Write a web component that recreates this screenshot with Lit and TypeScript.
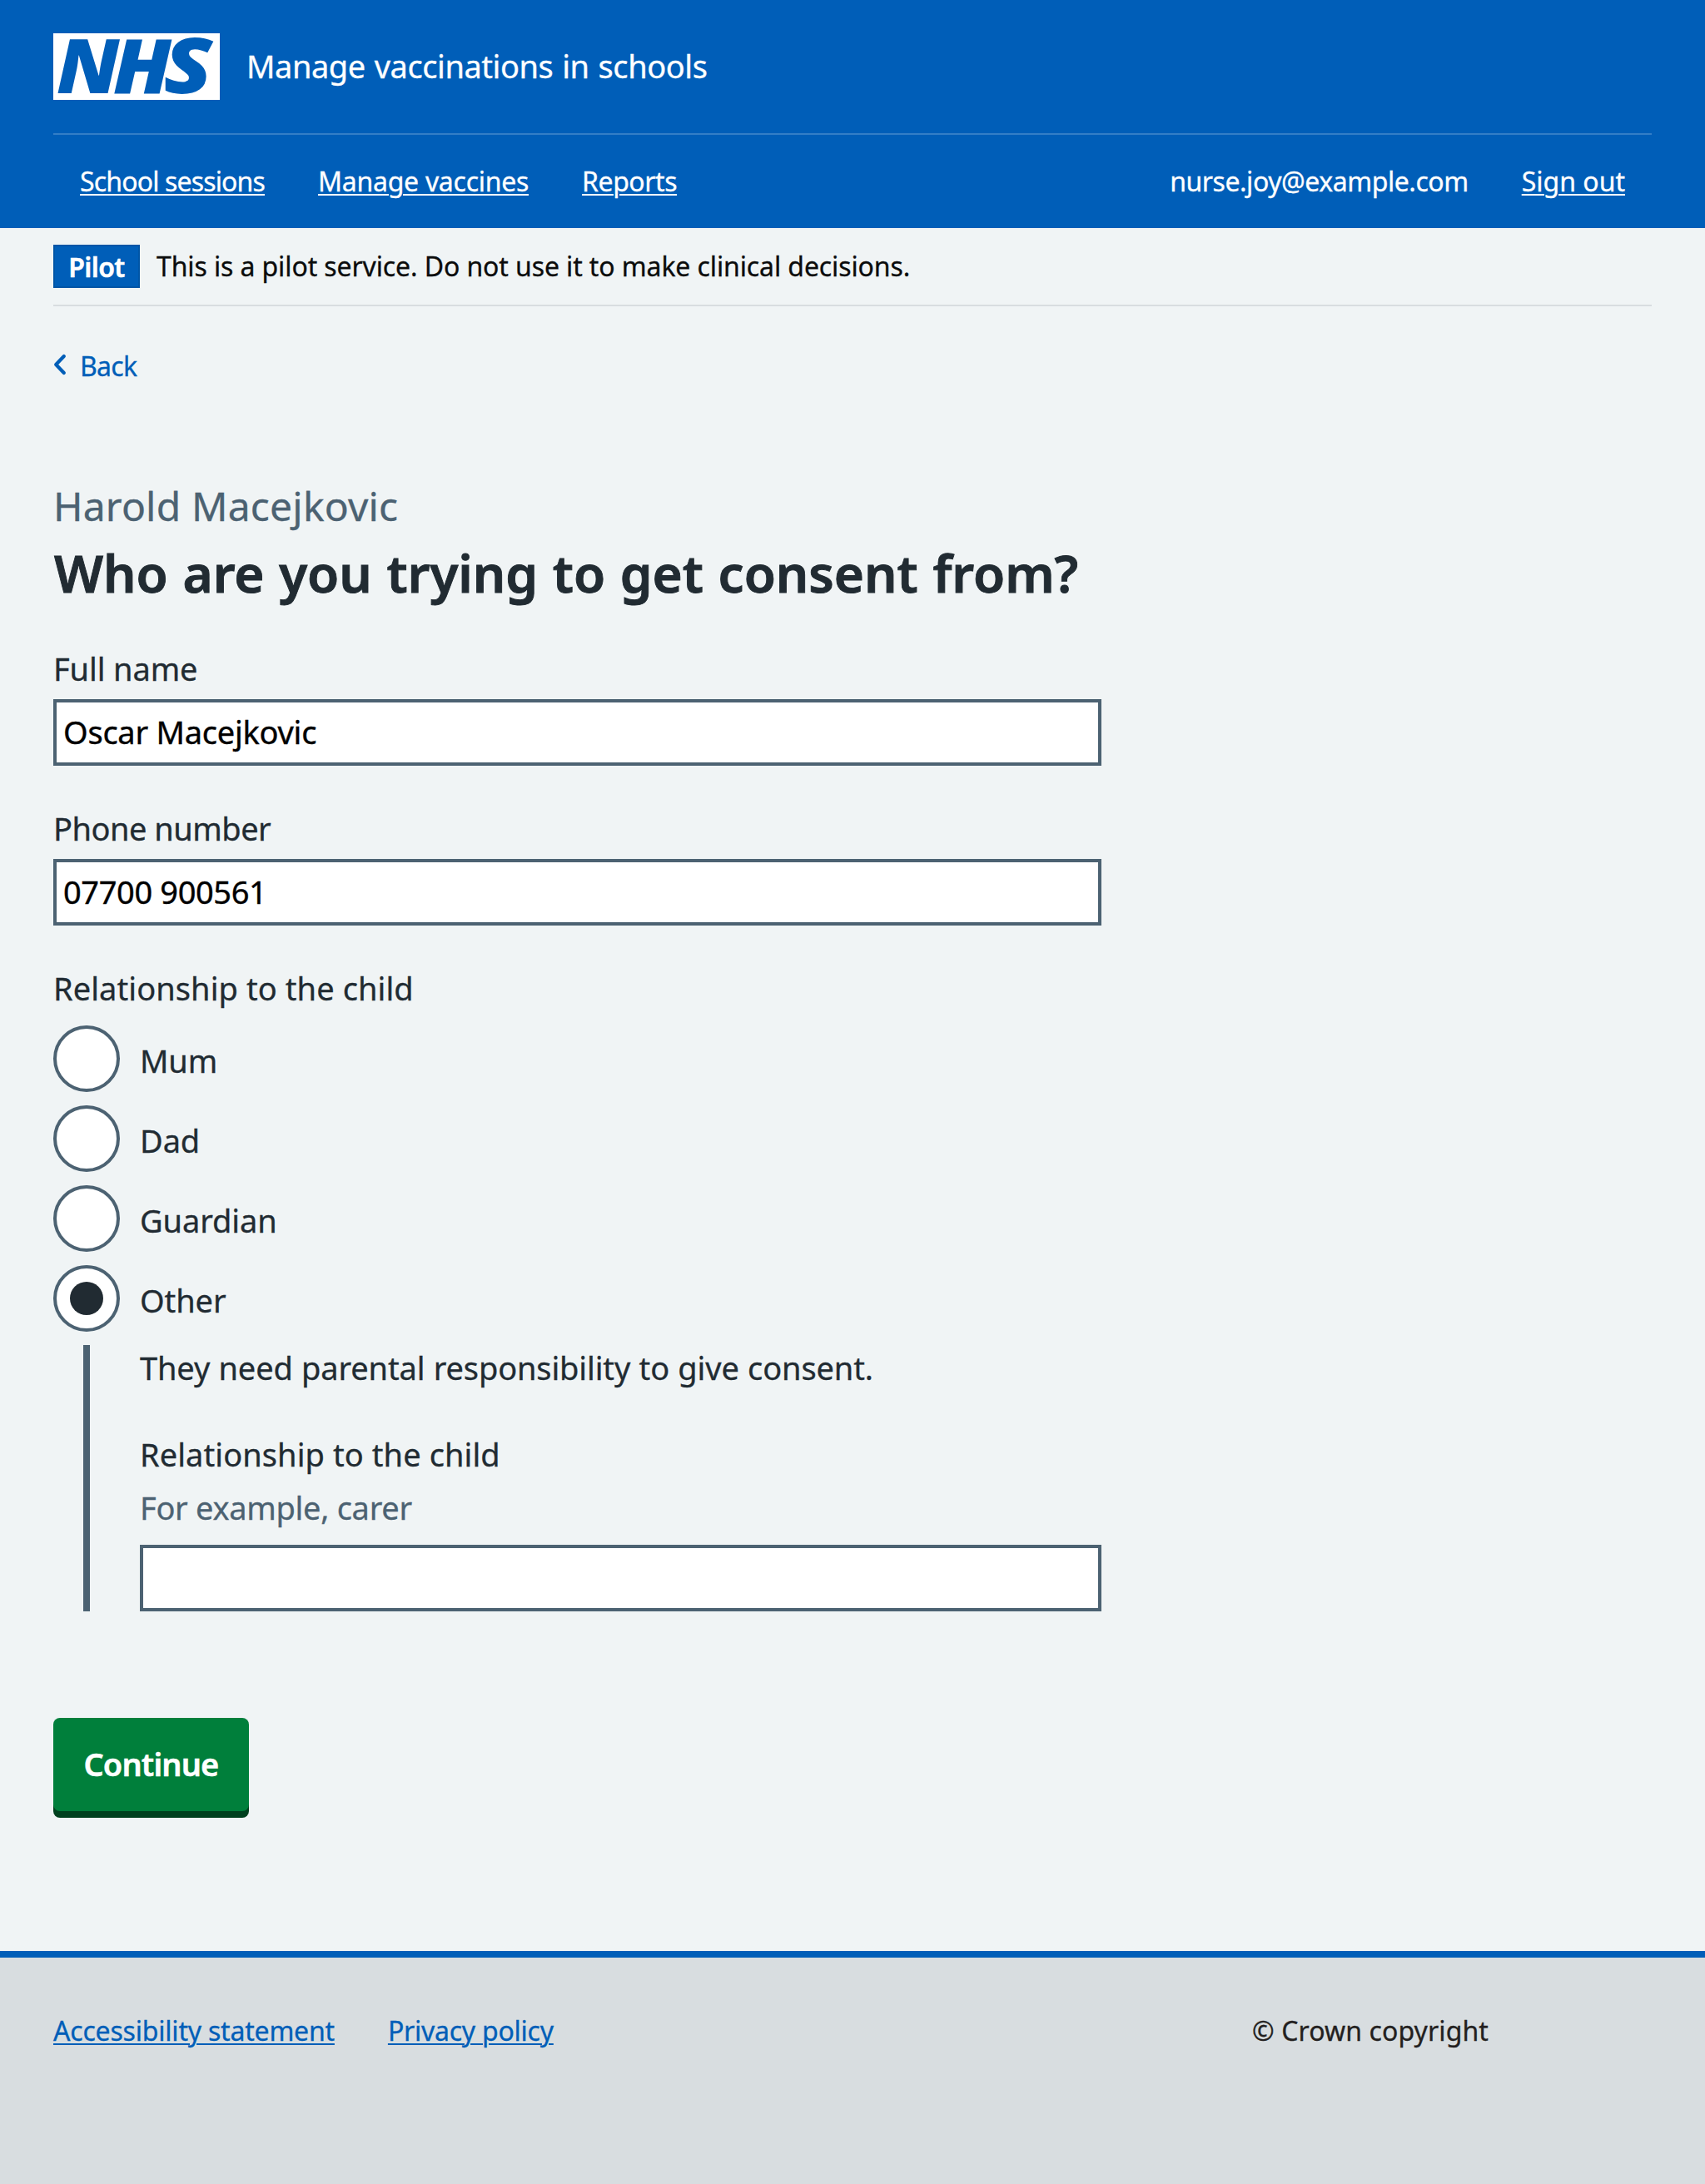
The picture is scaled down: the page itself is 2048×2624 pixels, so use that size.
import { LitElement, html, css } from "lit";
import { customElement, property } from "lit/decorators.js";
import { classMap } from "lit/directives/class-map.js";

@customElement("nhs-logo")
export class NhsLogo extends LitElement {
  static styles = css`
    :host { display: block; width: 200px; height: 80px; }
    .logo { display: block; width: 200px; height: 80px; overflow: visible; }
    .letter { font: italic 900 91px "Noto Sans", sans-serif; fill: #005eb8; stroke: none; -webkit-text-stroke: 0; }
  `;
  render() {
    return html`
      <svg class="logo" viewBox="0 0 200 80" role="img" aria-label="NHS">
        <rect width="200" height="80" fill="#fff"></rect>
        <text class="letter" transform="translate(4.1 72.3) scale(1.05 1)">N</text>
        <text class="letter" transform="translate(71.8 72.3) scale(1.08 1)">H</text>
        <text class="letter" transform="translate(132.5 72.4) scale(1.178 1.02)">S</text>
      </svg>
    `;
  }
}

@customElement("radio-option")
export class RadioOption extends LitElement {
  @property() label = "";
  @property({ type: Boolean }) checked = false;
  static styles = css`
    :host { display: flex; align-items: center; height: 80px; gap: 24px; letter-spacing: -0.1px; }
    .ring {
      box-sizing: border-box; width: 80px; height: 80px; border: 4px solid #4c6272;
      border-radius: 50%; background: #fff; display: grid; place-items: center;
    }
    .dot { width: 40px; height: 40px; border-radius: 50%; }
    .dot.on { background: #212b32; }
    .text { padding-top: 4px; }
  `;
  render() {
    return html`
      <span class="ring" role="radio" aria-checked=${this.checked}>
        <span class=${classMap({ dot: true, on: this.checked })}></span>
      </span>
      <span class="text">${this.label}</span>
    `;
  }
}

@customElement("app-root")
export class AppRoot extends LitElement {
  static styles = css`
    :host {
      display: flex; flex-direction: column; min-height: 2624px;
      background: #f0f4f5; color: #212b32;
      font: 38px/56px "Noto Sans", "Open Sans", sans-serif;
      -webkit-text-stroke: 0.3px currentColor;
    }
    a { color: inherit; text-decoration-thickness: 2px; text-underline-offset: 3px; }

    .header { background: #005eb8; color: #fff; padding: 0 64px; height: 274px; box-sizing: border-box; }
    .brand { display: flex; align-items: flex-start; gap: 32px; height: 80px; padding: 40px 0; border-bottom: 2px solid #337ec6; }
    .service { padding-top: 11px; letter-spacing: -0.44px; word-spacing: 1.5px; }
    .nav { display: flex; gap: 64px; padding: 32px 32px 0; font-size: 32px; line-height: 48px; }
    .sessions { letter-spacing: -0.85px; }
    .vaccines { letter-spacing: -0.27px; }
    .reports { letter-spacing: -0.44px; }
    .email { margin-left: auto; letter-spacing: -0.46px; }

    .pilot {
      display: flex; align-items: center; gap: 20px; margin: 0 64px; padding: 20px 0;
      border-bottom: 2px solid #d8dde0; font-size: 32px; line-height: 48px; color: #0b0c0c;
    }
    .tag {
      box-sizing: border-box; width: 104px; height: 52px; border: 2px solid #0055a6; padding-top: 1px;
      background: #005eb8; color: #fff; font-weight: 600; text-align: center; letter-spacing: -0.6px;
      -webkit-text-stroke-width: 0.5px;
    }
    .note { letter-spacing: -0.11px; }

    .main { padding: 48px 64px 0; display: flex; flex-direction: column; align-items: flex-start; flex: 1; }
    .back { display: flex; align-items: center; gap: 16px; font-size: 32px; line-height: 48px; color: #005eb8; text-decoration: none; letter-spacing: -0.7px; }
    .chevron { width: 16px; height: 26px; margin-top: -4px; }
    .caption { margin: 112px 0 0; font-size: 48px; line-height: 64px; color: #4c6272; letter-spacing: 0.18px; }
    .title {
      margin: 0 0 38px 1px; font-size: 62px; line-height: 96px; font-weight: 600; letter-spacing: -0.05px;
      word-spacing: 1.6px; white-space: nowrap; -webkit-text-stroke-width: 0.9px;
    }

    .form { width: 1259px; display: flex; flex-direction: column; }
    .field { display: flex; flex-direction: column; gap: 10px; margin-bottom: 46px; }
    .label { padding-top: 1px; margin-bottom: -1px; letter-spacing: -0.12px; }
    .phone { letter-spacing: -0.5px; }
    .relation { letter-spacing: 0.08px; }
    .input {
      box-sizing: border-box; width: 100%; height: 80px; margin: 0; padding: 0 8px 3px;
      border: 4px solid #4c6272; border-radius: 0; background: #fff; color: #000;
      font: inherit; letter-spacing: -0.25px; outline: none; -webkit-text-stroke: 0.4px #000;
    }
    .number { letter-spacing: -0.38px; }
    .radios { display: flex; flex-direction: column; gap: 16px; margin-top: 18px; }
    .conditional {
      display: flex; flex-direction: column; margin: 16px 0 0 36px; padding-left: 60px;
      border-left: 8px solid #4c6272;
    }
    .advice { padding-top: 1px; line-height: 52px; margin-bottom: 49px; letter-spacing: -0.13px; word-spacing: 0.6px; }
    .hint { color: #4c6272; margin: 9px 0 17px; letter-spacing: -0.3px; }

    .button {
      width: 235px; height: 112px; margin: 128px 0 0; padding: 0 0 3px; border: 0; border-radius: 8px;
      background: #007f3b; box-shadow: 0 8px 0 #00401e; color: #fff;
      font: inherit; font-weight: 600; letter-spacing: -0.85px; -webkit-text-stroke: 0.5px #fff;
    }

    .footer {
      box-sizing: border-box; height: 280px; padding: 64px 64px 0; border-top: 8px solid #005eb8;
      background: #d8dde0; display: grid; grid-template-columns: auto auto 1fr 480px; column-gap: 64px;
      align-items: start; font-size: 32px; line-height: 48px; color: #005eb8;
    }
    .accessibility { letter-spacing: -0.2px; }
    .privacy { letter-spacing: -0.24px; }
    .copyright { grid-column: 4; color: #231f20; letter-spacing: 0.1px; }
  `;

  render() {
    return html`
      <header class="header">
        <div class="brand">
          <nhs-logo></nhs-logo>
          <span class="service">Manage vaccinations in schools</span>
        </div>
        <nav class="nav">
          <a class="sessions" href="#">School sessions</a>
          <a class="vaccines" href="#">Manage vaccines</a>
          <a class="reports" href="#">Reports</a>
          <span class="email">nurse.joy@example.com</span>
          <a href="#">Sign out</a>
        </nav>
      </header>

      <div class="pilot">
        <strong class="tag">Pilot</strong>
        <span class="note">This is a pilot service. Do not use it to make clinical decisions.</span>
      </div>

      <main class="main">
        <a class="back" href="#">
          <svg class="chevron" viewBox="0 0 16 26" fill="none" stroke="#005eb8" stroke-width="4.2" stroke-linecap="round" stroke-linejoin="round">
            <path d="M12.8 3 3.2 13l9.6 10"></path>
          </svg>
          <span>Back</span>
        </a>
        <div class="caption">Harold Macejkovic</div>
        <h1 class="title">Who are you trying to get consent from?</h1>

        <div class="form">
          <div class="field">
            <label class="label" for="name">Full name</label>
            <input class="input" id="name" value="Oscar Macejkovic" />
          </div>
          <div class="field">
            <label class="label phone" for="phone">Phone number</label>
            <input class="input number" id="phone" value="07700 900561" />
          </div>
          <div class="label relation">Relationship to the child</div>
          <div class="radios">
            ${["Mum", "Dad", "Guardian", "Other"].map(
              (name) => html`<radio-option label=${name} ?checked=${name === "Other"}></radio-option>`
            )}
          </div>
          <div class="conditional">
            <div class="advice">They need parental responsibility to give consent.</div>
            <label class="label relation" for="other">Relationship to the child</label>
            <div class="hint">For example, carer</div>
            <input class="input" id="other" />
          </div>
        </div>
        <button class="button">Continue</button>
      </main>

      <footer class="footer">
        <a class="accessibility" href="#">Accessibility statement</a>
        <a class="privacy" href="#">Privacy policy</a>
        <span class="copyright">© Crown copyright</span>
      </footer>
    `;
  }
}
